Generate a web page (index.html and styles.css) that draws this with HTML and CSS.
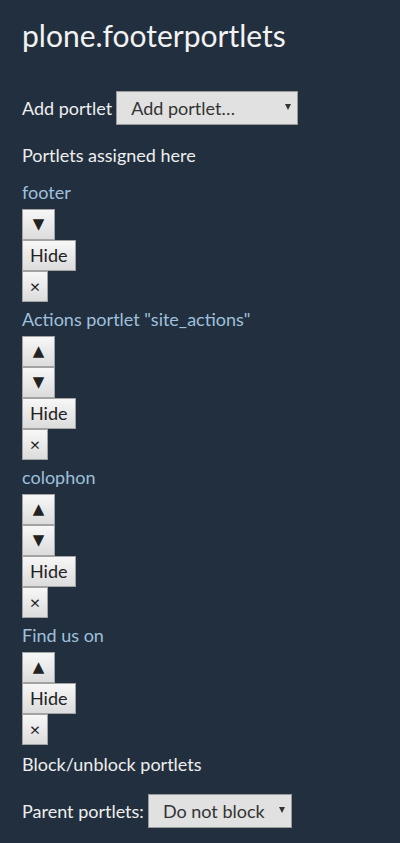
FILE: index.html
```html
<!DOCTYPE html>
<html lang="en">
<head>
<meta charset="utf-8">
<title>plone.footerportlets</title>
<link rel="stylesheet" href="styles.css">
</head>
<body>
<main class="page">
  <h1 class="title">plone.footerportlets</h1>

  <form class="add-row">
    <label class="label" for="add">Add portlet</label>
    <span class="select-wrap select-add">
      <select id="add" class="select">
        <option>Add portlet…</option>
      </select>
    </span>
  </form>

  <h2 class="section">Portlets assigned here</h2>

  <div class="portlets">
    <div class="portlet">
      <a class="portlet-link" href="#">footer</a>
      <button class="btn btn-arrow" type="button">▼</button>
      <button class="btn" type="button">Hide</button>
      <button class="btn btn-x" type="button">×</button>
    </div>
    <div class="portlet">
      <a class="portlet-link" href="#">Actions portlet "site_actions"</a>
      <button class="btn btn-arrow" type="button">▲</button>
      <button class="btn btn-arrow" type="button">▼</button>
      <button class="btn" type="button">Hide</button>
      <button class="btn btn-x" type="button">×</button>
    </div>
    <div class="portlet">
      <a class="portlet-link" href="#">colophon</a>
      <button class="btn btn-arrow" type="button">▲</button>
      <button class="btn btn-arrow" type="button">▼</button>
      <button class="btn" type="button">Hide</button>
      <button class="btn btn-x" type="button">×</button>
    </div>
    <div class="portlet">
      <a class="portlet-link" href="#">Find us on</a>
      <button class="btn btn-arrow" type="button">▲</button>
      <button class="btn" type="button">Hide</button>
      <button class="btn btn-x" type="button">×</button>
    </div>
  </div>

  <h2 class="section section-block">Block/unblock portlets</h2>

  <form class="add-row add-row-tight">
    <label class="label" for="parent">Parent portlets:</label>
    <span class="select-wrap select-block">
      <select id="parent" class="select">
        <option>Do not block</option>
      </select>
    </span>
  </form>
</main>
</body>
</html>
```

FILE: styles.css
```css
html, body {
  margin: 0;
  padding: 0;
  background: #222f3e;
}

body {
  font-family: Lato, "Open Sans", "Liberation Sans", sans-serif;
  font-size: 18px;
  color: #eeeeee;
}

.page {
  padding: 17px 22px 0 22px;
}

.title {
  margin: 0;
  font-size: 30px;
  font-weight: 400;
  line-height: 36px;
  color: #f2f2f2;
}

.add-row {
  display: flex;
  align-items: center;
  gap: 4px;
  margin: 38px 0 0 0;
  height: 34px;
}

.add-row-tight {
  margin-top: 18px;
}

.label {
  line-height: 24px;
  color: #eeeeee;
}

.select-wrap {
  position: relative;
  display: inline-block;
}

.select-wrap::after {
  content: "";
  position: absolute;
  right: 7px;
  top: 13px;
  border-left: 3px solid transparent;
  border-right: 3px solid transparent;
  border-top: 6px solid #333;
  pointer-events: none;
}

.select {
  appearance: none;
  -webkit-appearance: none;
  display: block;
  box-sizing: border-box;
  height: 34px;
  margin: 0;
  padding: 0 20px 0 14px;
  border: 1px solid #9a9a9a;
  border-radius: 0;
  background: #e1e1e1;
  color: #333333;
  font-family: Lato, "Open Sans", "Liberation Sans", sans-serif;
  font-size: 18px;
}

.select-add .select { width: 182px; }
.select-block .select { width: 144px; }

.section {
  margin: 18px 0 8px 0;
  font-size: 18px;
  font-weight: 400;
  line-height: 24px;
  color: #eeeeee;
}

.section-block {
  margin-top: 7px;
  margin-bottom: 0;
}

.portlet-link {
  display: block;
  line-height: 34px;
  color: #9fc0dd;
  text-decoration: none;
}

.btn {
  display: block;
  box-sizing: border-box;
  height: 31px;
  margin: 0;
  padding: 0 7px;
  border: 1px solid #a3a3a3;
  border-radius: 0;
  background: linear-gradient(#f7f7f7, #dcdcdc);
  color: #222222;
  font-family: Lato, "DejaVu Sans", sans-serif;
  font-size: 18px;
  line-height: 29px;
}

.btn-arrow {
  width: 33px;
  padding: 0;
  font-family: "DejaVu Sans", sans-serif;
  font-size: 15px;
  text-align: center;
}

.btn-x {
  width: 26px;
  padding: 0;
  font-size: 18px;
  text-align: center;
}
```
